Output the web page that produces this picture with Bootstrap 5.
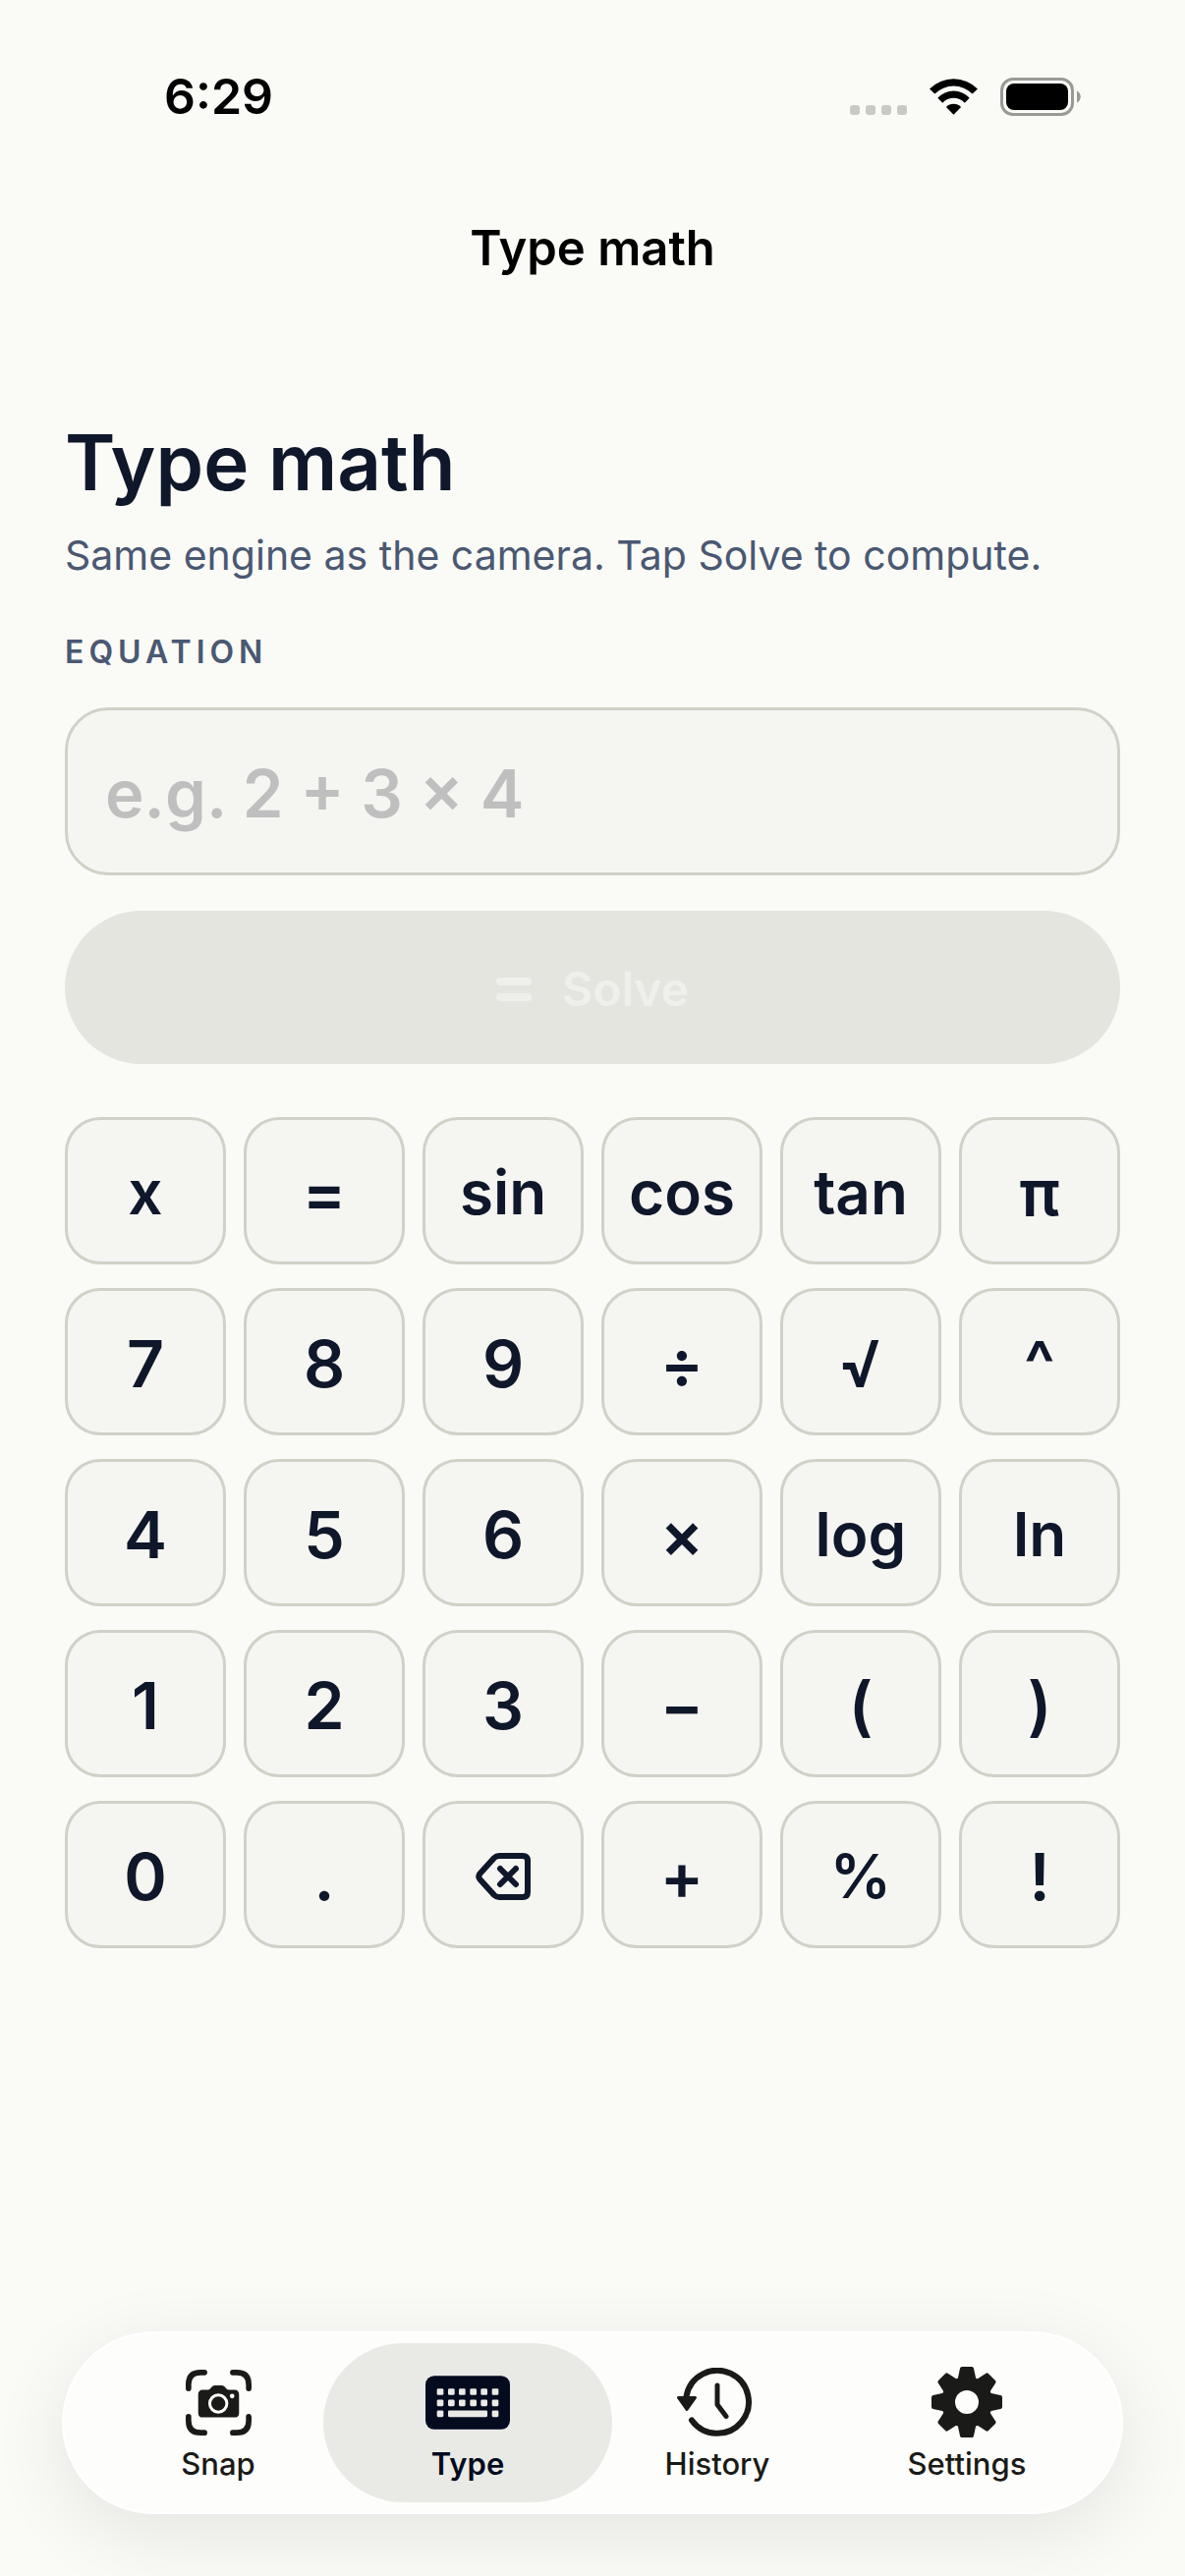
<!DOCTYPE html>
<html lang="en">
<head>
<meta charset="utf-8">
<meta name="viewport" content="width=device-width, initial-scale=1">
<title>Type math</title>
<link href="https://cdn.jsdelivr.net/npm/bootstrap@5.3.0/dist/css/bootstrap.min.css" rel="stylesheet">
<style>
  :root {
    --paper: #fafbf7;
    --key-fill: #f5f5f2;
    --key-line: #d0d1c7;
    --ink: #0f172a;
    --ink-soft: #4a5872;
    --tab-ink: #1a1a18;
  }
  body { background: var(--paper); color: var(--ink); font-family: Inter, "Liberation Sans", sans-serif; }
  svg { display: block; flex: none; }

  .status-bar { padding: 68px 106px 0 167px; color: #000; }
  .clock { font-size: 50px; line-height: 60px; font-weight: 600; }
  .status-icons { gap: 22px; }
  .screen-title { margin-top: 95px; font-size: 49px; line-height: 60px; font-weight: 600; color: #000; }

  main { padding: 138px 66px 60px; }
  .page-title { font-size: 78px; line-height: 100px; font-weight: 600; }
  .page-sub { margin-top: 19px; font-size: 41px; line-height: 50px; color: var(--ink-soft); }
  .field-label { margin-top: 54px; font-size: 32px; line-height: 40px; font-weight: 600; letter-spacing: 5px; color: var(--ink-soft); }
  .equation, .equation:focus {
    margin-top: 36px; height: 171px; padding: 3px 38px 0;
    font-size: 67px; font-weight: 600; color: var(--ink);
    background: var(--key-fill); border: 3px solid var(--key-line); border-radius: 44px; box-shadow: none;
  }
  .equation::placeholder { color: #bfbfbf; opacity: 1; }
  .solve, .solve:disabled {
    margin-top: 36px; height: 156px; padding: 3px 0 0; gap: 31px; border: 0;
    font-size: 48px; font-weight: 600; color: #eff0ec; background: #e4e5df; opacity: 1;
  }

  .keypad { display: grid; grid-template-columns: repeat(6, minmax(0, 1fr)); gap: 24px 18px; margin-top: 54px; }
  .key {
    height: 150px; padding: 3px 0 0; font-size: 66px; line-height: 80px; font-weight: 600; color: var(--ink);
    background: var(--key-fill); border: 3px solid var(--key-line); border-radius: 36px;
  }
  .key-word { font-size: 62px; }

  .tab-bar { margin: 0 63px 63px; padding: 10px 30px; background: #fdfdfb; border: 2px solid #fff; box-shadow: 0 20px 80px rgba(0, 0, 0, .09); }
  .tab-item {
    margin: 0 -20px; height: 162px; padding: 24px 0 0; gap: 7px;
    font-size: 31px; line-height: 40px; font-weight: 500; color: var(--tab-ink);
  }
  .tab-item.active { background: #e9eae6; color: #040b1e; font-weight: 600; }
  .tab-icon { height: 72px; }
</style>
<script src="https://cdn.jsdelivr.net/npm/bootstrap@5.3.0/dist/js/bootstrap.bundle.min.js"></script>
</head>
<body class="d-flex flex-column min-vh-100">

<header>
  <div class="status-bar d-flex justify-content-between align-items-center">
    <span class="clock">6:29</span>
    <div class="status-icons d-flex align-items-center">
      <svg width="58" height="39" viewBox="0 0 58 39" fill="#c9cac6" aria-label="No cellular signal">
        <rect x="0" y="28" width="10" height="10" rx="3"/><rect x="16" y="28" width="10" height="10" rx="3"/>
        <rect x="32" y="28" width="10" height="10" rx="3"/><rect x="48" y="28" width="10" height="10" rx="3"/>
      </svg>
      <svg width="51" height="37" viewBox="0 0 152 112" aria-label="Wi-Fi">
        <path d="M2 32A104 104 0 0 1 150 32L134 47A82 82 0 0 0 18 47Z"/>
        <path d="M27 60A66 66 0 0 1 125 60L110 75A46 46 0 0 0 42 75Z"/>
        <path d="M53 88A32 32 0 0 1 99 88L76 111Z"/>
      </svg>
      <svg width="82" height="39" viewBox="0 0 82 39" aria-label="Battery full">
        <rect x="1.5" y="1.5" width="72" height="36" rx="11.5" fill="none" stroke="#999a96" stroke-width="3"/>
        <rect x="6" y="6" width="63" height="27" rx="8"/>
        <path d="M78 13.5c5 2 5 10 0 12z" fill="#999a96"/>
      </svg>
    </div>
  </div>
  <div class="screen-title text-center">Type math</div>
</header>

<main>
  <h1 class="page-title mb-0">Type math</h1>
  <p class="page-sub mb-0">Same engine as the camera. Tap Solve to compute.</p>
  <form>
    <label class="field-label d-block" for="equation">EQUATION</label>
    <input class="equation form-control" id="equation" type="text" placeholder="e.g. 2 + 3 × 4" autocomplete="off">
    <button class="solve btn rounded-pill w-100 d-flex justify-content-center align-items-center" type="submit" disabled>
      <svg width="36" height="24" viewBox="0 0 36 24" fill="currentColor" aria-hidden="true">
        <rect width="36" height="8" rx="4"/><rect y="16" width="36" height="8" rx="4"/>
      </svg>
      <span>Solve</span>
    </button>
  </form>

  <div class="keypad">
    <button class="key key-word btn" type="button">x</button>
    <button class="key btn" type="button">=</button>
    <button class="key key-word btn" type="button">sin</button>
    <button class="key key-word btn" type="button">cos</button>
    <button class="key key-word btn" type="button">tan</button>
    <button class="key btn" type="button">π</button>

    <button class="key btn" type="button">7</button>
    <button class="key btn" type="button">8</button>
    <button class="key btn" type="button">9</button>
    <button class="key btn" type="button">÷</button>
    <button class="key btn" type="button">√</button>
    <button class="key btn" type="button">^</button>

    <button class="key btn" type="button">4</button>
    <button class="key btn" type="button">5</button>
    <button class="key btn" type="button">6</button>
    <button class="key btn" type="button">×</button>
    <button class="key key-word btn" type="button">log</button>
    <button class="key key-word btn" type="button">ln</button>

    <button class="key btn" type="button">1</button>
    <button class="key btn" type="button">2</button>
    <button class="key btn" type="button">3</button>
    <button class="key btn" type="button">−</button>
    <button class="key btn" type="button">(</button>
    <button class="key btn" type="button">)</button>

    <button class="key btn" type="button">0</button>
    <button class="key btn" type="button">.</button>
    <button class="key btn d-flex justify-content-center align-items-center" type="button" aria-label="Delete">
      <svg width="56" height="48" viewBox="0 0 56 48" fill="none" stroke="currentColor" stroke-width="6" stroke-linecap="round" stroke-linejoin="round">
        <path d="M24 3H48Q53 3 53 8V40Q53 45 48 45H24Q21 45 19 43L4.500 27Q2 24 4.500 21L19 5Q21 3 24 3Z"/>
        <path d="M25 16 41 32M41 16 25 32"/>
      </svg>
    </button>
    <button class="key btn" type="button">+</button>
    <button class="key key-word btn" type="button">%</button>
    <button class="key btn" type="button">!</button>
  </div>
</main>

<nav class="tab-bar nav rounded-pill mt-auto flex-nowrap" aria-label="Sections">
  <div class="nav-item w-25">
    <a class="tab-item nav-link rounded-pill d-flex flex-column align-items-center" href="#">
      <span class="tab-icon d-flex align-items-center">
        <svg width="67" height="67" viewBox="0 0 200 200" aria-hidden="true">
          <g fill="none" stroke="currentColor" stroke-width="17" stroke-linecap="round">
            <path d="M8.500 57V45Q8.500 8.500 45 8.500H57"/><path d="M143 8.500H155Q191.500 8.500 191.500 45V57"/>
            <path d="M191.500 143V155Q191.500 191.500 155 191.500H143"/><path d="M57 191.500H45Q8.500 191.500 8.500 155V143"/>
          </g>
          <path fill="currentColor" d="M52 61H68Q73 61 76 56Q81 48 88 48H110Q117 48 122 56Q125 61 130 61H148Q162 61 162 75V131Q162 145 148 145H52Q38 145 38 131V75Q38 61 52 61Z"/>
          <circle cx="99" cy="103" r="26" fill="none" stroke="#fdfdfb" stroke-width="9"/>
          <circle cx="141" cy="80" r="7" fill="#fdfdfb"/>
        </svg>
      </span>
      <span>Snap</span>
    </a>
  </div>
  <div class="nav-item w-25">
    <a class="tab-item active nav-link rounded-pill d-flex flex-column align-items-center" href="#" aria-current="page">
      <span class="tab-icon d-flex align-items-center">
        <svg width="86" height="55" viewBox="0 0 258 164" aria-hidden="true">
          <rect width="258" height="164" rx="27" fill="currentColor"/>
          <g fill="#e9eae6">
            <rect x="35" y="39" width="20" height="20" rx="4"/><rect x="69" y="39" width="20" height="20" rx="4"/><rect x="102" y="39" width="20" height="20" rx="4"/><rect x="136" y="39" width="20" height="20" rx="4"/><rect x="169" y="39" width="20" height="20" rx="4"/><rect x="203" y="39" width="20" height="20" rx="4"/>
            <rect x="35" y="73" width="20" height="20" rx="4"/><rect x="69" y="73" width="20" height="20" rx="4"/><rect x="102" y="73" width="20" height="20" rx="4"/><rect x="136" y="73" width="20" height="20" rx="4"/><rect x="169" y="73" width="20" height="20" rx="4"/><rect x="203" y="73" width="20" height="20" rx="4"/>
            <rect x="35" y="106" width="20" height="20" rx="4"/><rect x="69" y="106" width="120" height="20" rx="4"/><rect x="203" y="106" width="20" height="20" rx="4"/>
          </g>
        </svg>
      </span>
      <span>Type</span>
    </a>
  </div>
  <div class="nav-item w-25">
    <a class="tab-item nav-link rounded-pill d-flex flex-column align-items-center" href="#">
      <span class="tab-icon d-flex align-items-center">
        <svg width="82" height="70" viewBox="0 0 82 70" fill="none" stroke="currentColor" stroke-linecap="round" stroke-linejoin="round" aria-hidden="true">
          <path stroke-width="6" d="M15 53.500A32 32 0 1 0 9.500 29"/>
          <path stroke-width="3" fill="currentColor" d="M1.500 30.500H18.500L10 42.500Z"/>
          <path stroke-width="5" d="M41 18V37.500L50 49.500"/>
        </svg>
      </span>
      <span>History</span>
    </a>
  </div>
  <div class="nav-item w-25">
    <a class="tab-item nav-link rounded-pill d-flex flex-column align-items-center" href="#">
      <span class="tab-icon d-flex align-items-center">
        <svg width="72" height="72" viewBox="-36 -36 72 72" aria-hidden="true">
          <circle r="19" fill="none" stroke="currentColor" stroke-width="14"/>
          <g fill="currentColor" stroke="currentColor" stroke-width="4" stroke-linejoin="round">
            <path id="tooth" d="M-5 -34H5L8 -20H-8Z"/>
            <use href="#tooth" transform="rotate(45)"/><use href="#tooth" transform="rotate(90)"/><use href="#tooth" transform="rotate(135)"/>
            <use href="#tooth" transform="rotate(180)"/><use href="#tooth" transform="rotate(225)"/><use href="#tooth" transform="rotate(270)"/><use href="#tooth" transform="rotate(315)"/>
          </g>
        </svg>
      </span>
      <span>Settings</span>
    </a>
  </div>
</nav>

</body>
</html>
